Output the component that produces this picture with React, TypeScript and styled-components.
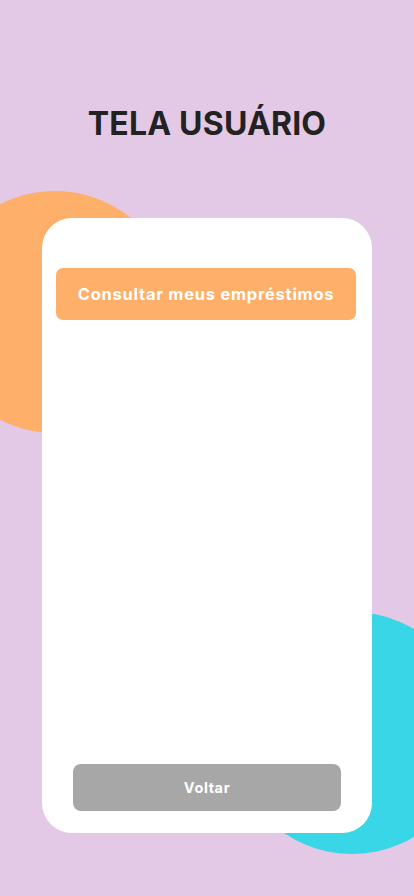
import React from "react";
import styled, { createGlobalStyle } from "styled-components";

const GlobalStyle = createGlobalStyle`
  html, body {
    margin: 0;
    padding: 0;
    background: #e3c9e5;
  }
  * {
    box-sizing: border-box;
  }
`;

const Screen = styled.div`
  position: relative;
  width: 414px;
  height: 896px;
  overflow: hidden;
  background: #e3c9e5;
  font-family: "Inter", "Liberation Sans", sans-serif;
  display: flex;
  flex-direction: column;
  align-items: center;
`;

interface BlobProps {
  color: string;
  cx: number;
  cy: number;
  r: number;
}

// decorative circles behind the card
const Blob = styled.div<BlobProps>`
  position: absolute;
  left: ${(p) => p.cx - p.r}px;
  top: ${(p) => p.cy - p.r}px;
  width: ${(p) => p.r * 2}px;
  height: ${(p) => p.r * 2}px;
  border-radius: 50%;
  background: ${(p) => p.color};
  z-index: 0;
`;

const Title = styled.h1`
  position: relative;
  z-index: 1;
  margin: 100px 0 0;
  height: 48px;
  line-height: 48px;
  font-size: 32px;
  font-weight: 700;
  color: #222222;
  letter-spacing: 0.2px;
`;

const Card = styled.div`
  position: relative;
  z-index: 1;
  margin-top: 70px;
  width: 330px;
  height: 615px;
  background: #ffffff;
  border-radius: 30px;
  padding: 50px 16px 22px 14px;
  display: flex;
  flex-direction: column;
  justify-content: space-between;
  align-items: center;
`;

interface ActionProps {
  variant: "primary" | "muted";
}

const Action = styled.button<ActionProps>`
  border: none;
  cursor: pointer;
  font-family: inherit;
  font-weight: 700;
  color: #ffffff;
  display: flex;
  align-items: center;
  justify-content: center;
  width: ${(p) => (p.variant === "primary" ? "300px" : "268px")};
  height: ${(p) => (p.variant === "primary" ? "52px" : "47px")};
  border-radius: ${(p) => (p.variant === "primary" ? "7px" : "8px")};
  font-size: ${(p) => (p.variant === "primary" ? "16.5px" : "14.5px")};
  letter-spacing: ${(p) => (p.variant === "primary" ? "0.75px" : "0.6px")};
  background: ${(p) => (p.variant === "primary" ? "#feaf6a" : "#a7a7a7")};
  &:last-child {
    margin-left: 2px;
  }
`;

const App: React.FC = () => {
  return (
    <Screen>
      <GlobalStyle />
      <Blob color="#feaf6a" cx={55} cy={312} r={121} />
      <Blob color="#38d6e6" cx={352} cy={733} r={121} />
      <Title>TELA USUÁRIO</Title>
      <Card>
        <Action variant="primary">Consultar meus empréstimos</Action>
        <Action variant="muted">Voltar</Action>
      </Card>
    </Screen>
  );
};

export default App;
